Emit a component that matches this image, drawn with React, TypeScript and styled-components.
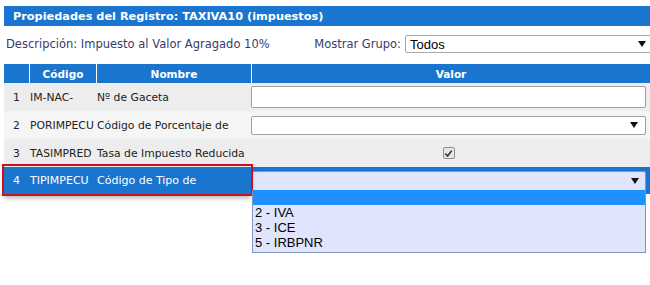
import styled, { createGlobalStyle } from 'styled-components';

const GlobalStyle = createGlobalStyle`
  html, body {
    margin: 0;
    padding: 0;
    background: #ffffff;
  }
  body {
    font-family: "DejaVu Sans", Verdana, sans-serif;
    font-size: 11px;
    overflow: hidden;
  }
`;

const BLUE = '#1a75cf';

const Page = styled.div`
  position: relative;
  box-sizing: border-box;
  width: 650px;
  height: 285px;
  padding: 6px 0 0 4px;
`;

const TitleBar = styled.div`
  height: 20px;
  display: flex;
  align-items: center;
  padding-left: 9px;
  background: ${BLUE};
  color: #ffffff;
  font-weight: bold;
  font-size: 11.3px;
  white-space: nowrap;
`;

const InfoRow = styled.div`
  display: flex;
  align-items: center;
  justify-content: space-between;
  margin-top: 9px;
  height: 18px;
  color: #3a3a6a;
`;

const Description = styled.span`
  padding-left: 2px;
  font-size: 11.5px;
`;

const GroupFilter = styled.label`
  display: flex;
  align-items: center;
  gap: 4px;
  margin-right: -3px;
  font-size: 11.5px;
`;

const NativeLikeSelect = styled.div<{ $width: number; $tint?: boolean }>`
  box-sizing: border-box;
  width: ${(p) => p.$width}px;
  height: ${(p) => (p.$tint ? 20 : 18)}px;
  display: flex;
  align-items: center;
  justify-content: space-between;
  padding: 0 6px 0 4px;
  border: 1px solid ${(p) => (p.$tint ? '#7d96c4' : '#a9a9a9')};
  border-radius: 2px;
  background: ${(p) => (p.$tint ? '#e0e4fc' : '#ffffff')};
  color: #000000;
  font-family: "Liberation Sans", Arial, sans-serif;
  font-size: 13px;
`;

const Arrow = styled.span`
  width: 0;
  height: 0;
  border-left: 4px solid transparent;
  border-right: 4px solid transparent;
  border-top: 6px solid #111111;
`;

const Grid = styled.div`
  margin-top: 11px;
`;

const cols = '25px 67px 155px 1fr';

const HeaderRow = styled.div`
  display: grid;
  grid-template-columns: ${cols};
  height: 19px;
  background: ${BLUE};
  color: #ffffff;
  font-weight: bold;
  font-size: 10.5px;
`;

const HeaderCell = styled.div`
  display: flex;
  align-items: center;
  justify-content: center;
  border-left: 1px solid #ffffff;
  &:first-child {
    border-left: none;
  }
`;

const Row = styled.div<{ $shade: string }>`
  display: grid;
  grid-template-columns: ${cols};
  height: 28px;
  align-items: center;
  background: ${(p) => p.$shade};
  color: #222222;
  font-size: 10.8px;
`;

const Num = styled.div`
  text-align: center;
`;

const Cell = styled.div`
  padding-left: 1px;
  white-space: nowrap;
  overflow: hidden;
`;

const ValueCell = styled.div`
  display: flex;
  justify-content: center;
  padding-right: 4px;
`;

const TextInput = styled.div`
  box-sizing: border-box;
  width: 100%;
  height: 22px;
  border: 1px solid #a0a0a0;
  border-radius: 2px;
  background: #ffffff;
`;

const SelectBox = styled(TextInput)`
  height: 19px;
  display: flex;
  align-items: center;
  justify-content: flex-end;
  padding-right: 7px;
`;

const CheckMark = styled.span`
  box-sizing: border-box;
  width: 12px;
  height: 12px;
  display: flex;
  align-items: center;
  justify-content: center;
  border: 1px solid #8f8f8f;
  border-radius: 2px;
  background: #e6e6e6;
  & > svg {
    width: 9px;
    height: 9px;
  }
`;

const SelectedRow = styled.div`
  display: flex;
  height: 27px;
  background: ${BLUE};
  color: #ffffff;
  font-family: Tahoma, "DejaVu Sans", sans-serif;
  font-size: 11px;
`;

const Marked = styled.div`
  display: grid;
  grid-template-columns: 25px 67px 155px;
  width: 247px;
  align-items: center;
  outline: 2px solid #c8101e;
  margin-top: -1px;
  box-shadow: 0 4px 5px rgba(0, 0, 0, 0.3);
  position: relative;
  z-index: 1;
`;

const MarkedValue = styled.div`
  flex: 1;
  display: flex;
  align-items: center;
  padding: 0 4px 0 1px;
`;

const DropList = styled.ul`
  position: absolute;
  left: 252px;
  top: 190px;
  width: 394px;
  margin: 0;
  padding: 0 0 2px;
  box-sizing: border-box;
  list-style: none;
  border: 1px solid #7d96c4;
  border-top: none;
  background: #e0e4fc;
  font-family: "Liberation Sans", Arial, sans-serif;
  font-size: 13px;
  color: #000000;
  z-index: 2;
`;

const Option = styled.li<{ $active?: boolean }>`
  height: 15px;
  line-height: 15px;
  padding-left: 2px;
  background: ${(p) => (p.$active ? '#1e90ff' : 'transparent')};
`;

const rows = [
  { n: 1, code: 'IM-NAC-', name: 'Nº de Gaceta', kind: 'input', shade: '#ededed' },
  { n: 2, code: 'PORIMPECU', name: 'Código de Porcentaje de', kind: 'select', shade: '#f5f5f5' },
  { n: 3, code: 'TASIMPRED', name: 'Tasa de Impuesto Reducida', kind: 'check', shade: '#ededed' },
];

export default function App() {
  return (
    <>
      <GlobalStyle />
      <Page>
        <TitleBar>Propiedades del Registro: TAXIVA10 (impuestos)</TitleBar>
        <InfoRow>
          <Description>Descripción: Impuesto al Valor Agragado 10%</Description>
          <GroupFilter>
            Mostrar Grupo:
            <NativeLikeSelect $width={248}>
              <span>Todos</span>
              <Arrow />
            </NativeLikeSelect>
          </GroupFilter>
        </InfoRow>
        <Grid>
          <HeaderRow>
            <HeaderCell />
            <HeaderCell>Código</HeaderCell>
            <HeaderCell>Nombre</HeaderCell>
            <HeaderCell>Valor</HeaderCell>
          </HeaderRow>
          {rows.map((r) => (
            <Row key={r.n} $shade={r.shade}>
              <Num>{r.n}</Num>
              <Cell>{r.code}</Cell>
              <Cell>{r.name}</Cell>
              <ValueCell>
                {r.kind === 'input' && <TextInput />}
                {r.kind === 'select' && (
                  <SelectBox>
                    <Arrow />
                  </SelectBox>
                )}
                {r.kind === 'check' && (
                  <CheckMark>
                    <svg viewBox="0 0 10 10">
                      <path d="M1.5 5.2 L4 7.8 L8.6 1.8" fill="none" stroke="#333" strokeWidth="1.8" />
                    </svg>
                  </CheckMark>
                )}
              </ValueCell>
            </Row>
          ))}
          <SelectedRow>
            <Marked>
              <Num>4</Num>
              <Cell>TIPIMPECU</Cell>
              <Cell>Código de Tipo de</Cell>
            </Marked>
            <MarkedValue>
              <NativeLikeSelect $width={394} $tint>
                <span />
                <Arrow />
              </NativeLikeSelect>
            </MarkedValue>
          </SelectedRow>
        </Grid>
        <DropList>
          <Option $active>&nbsp;</Option>
          <Option>2 - IVA</Option>
          <Option>3 - ICE</Option>
          <Option>5 - IRBPNR</Option>
        </DropList>
      </Page>
    </>
  );
}
